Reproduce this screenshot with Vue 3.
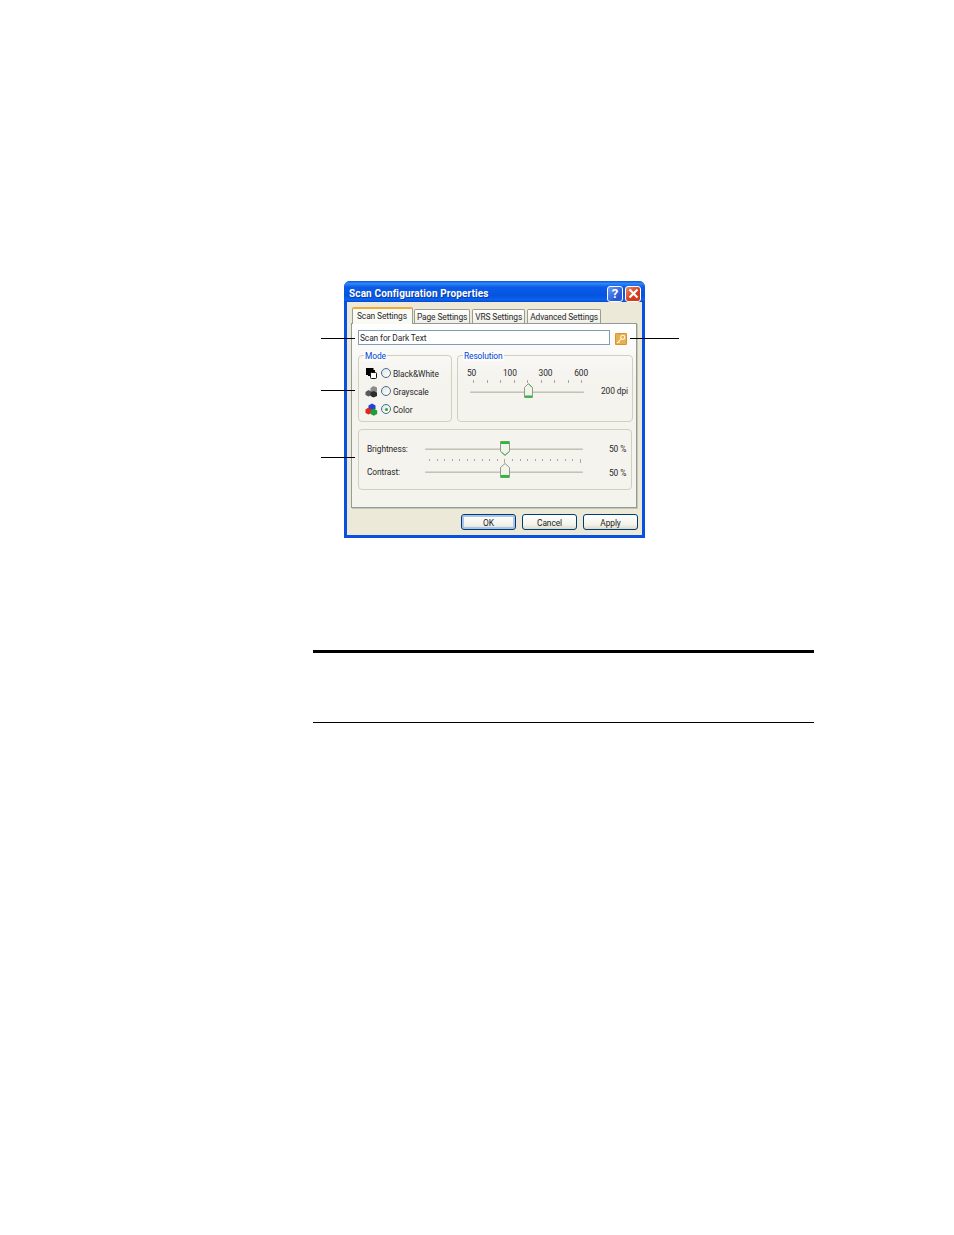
<script setup>
const modes = [
  { label: 'Black&White', kind: 'bw', on: false },
  { label: 'Grayscale', kind: 'gray', on: false },
  { label: 'Color', kind: 'color', on: true },
]
const tabs = ['Page Settings', 'VRS Settings', 'Advanced Settings']
const resLabels = ['50', '100', '300', '600']
const resTicks = 9
const fineTicks = 21
const leaders = [
  { cls: 'l1' }, { cls: 'l2' }, { cls: 'l3' }, { cls: 'l4' },
]
</script>

<template>
  <div class="page">
    <div class="stage">
      <span v-for="l in leaders" :key="l.cls" class="leader" :class="l.cls"></span>
      <div class="window">
        <div class="titlebar">
          <span class="title">Scan Configuration Properties</span>
          <span class="capbtn help">?</span>
          <span class="capbtn close">
            <svg width="11" height="11" viewBox="0 0 11 11"><path d="M1.5 1.5l8 8M9.5 1.5l-8 8" stroke="#fff" stroke-width="2.2" fill="none"/></svg>
          </span>
        </div>
        <div class="client">
          <div class="tabs">
            <div class="tab active">Scan Settings</div>
            <div v-for="t in tabs" :key="t" class="tab">{{ t }}</div>
          </div>
          <div class="panel">
            <div class="name-row">
              <div class="edit">Scan for Dark Text</div>
              <svg class="key" width="12" height="12" viewBox="0 0 12 12">
                <rect width="12" height="12" rx="1" fill="#e9ae4e"/>
                <rect x="0.5" y="0.5" width="11" height="11" rx="1" fill="none" stroke="#d4952f"/>
                <circle cx="7.8" cy="4.2" r="2" fill="#e9ae4e" stroke="#fff6dc" stroke-width="1.1"/>
                <path d="M6.2 5.8L2.2 9.8M3.3 8.7l1.2 1.2" stroke="#fff6dc" stroke-width="1.1" fill="none"/>
              </svg>
            </div>
            <div class="groups">
              <div class="group mode">
                <span class="legend">Mode</span>
                <div v-for="m in modes" :key="m.label" class="mode-row">
                  <svg class="mode-icon" width="13" height="13" viewBox="0 0 13 13">
                    <template v-if="m.kind === 'bw'">
                      <path d="M1 1H8.5V3H10V9H3V8H1Z" fill="#000"/>
                      <rect x="5.5" y="5.5" width="6" height="6" rx="1" fill="#fff" stroke="#111"/>
                    </template>
                    <template v-else-if="m.kind === 'gray'">
                      <path d="M5.5 3L8.5 1L12 2.5V6.5L8.5 8L5.5 6.5Z" fill="#8c8c8c"/>
                      <path d="M0.5 7L3.5 5L6.5 6.5V10L3.5 11.5L0.5 10Z" fill="#5a5a5a"/>
                      <path d="M5.5 7.5L8.5 6L12 7.5V11L8.5 12.5L5.5 11Z" fill="#2c2c2c"/>
                    </template>
                    <template v-else>
                      <path d="M3.5 2.5L7 0.5L10.5 2.5V6L7 8L3.5 6Z" fill="#2342d6"/>
                      <path d="M0.5 6.5L3.5 4.5L6.5 6.5V10L3.5 11.5L0.5 10Z" fill="#e0261f"/>
                      <path d="M5.5 7.5L8.8 5.5L12.2 7.5V11L8.8 12.8L5.5 11Z" fill="#1f9e36"/>
                    </template>
                  </svg>
                  <span class="radio" :class="{ on: m.on }"></span>
                  <span class="mode-label">{{ m.label }}</span>
                </div>
              </div>
              <div class="group res">
                <span class="legend">Resolution</span>
                <div class="res-labels">
                  <span v-for="r in resLabels" :key="r">{{ r }}</span>
                </div>
                <div class="ticks res-ticks">
                  <i v-for="n in resTicks" :key="n"></i>
                </div>
                <div class="res-slider">
                  <div class="track res-track">
                    <svg class="thumb res-thumb" width="9" height="15" viewBox="0 0 9 15">
                      <path d="M4.5 .5L8.5 4.5V14.5H.5V4.5Z" fill="#f3f3ea" stroke="#8d9a8c"/>
                      <path d="M1 12.5H8V14.5H1Z" fill="#22c035"/>
                      <path d="M4.5 1L8 4.5" stroke="#4bc05a" fill="none"/>
                    </svg>
                  </div>
                  <span class="dpi">200 dpi</span>
                </div>
              </div>
            </div>
            <div class="group tone">
              <div class="tone-row bright">
                <span class="tone-label">Brightness:</span>
                <div class="track tone-track">
                  <svg class="thumb tone-thumb" width="10" height="15" viewBox="0 0 10 15">
                    <path d="M.5 .5H9.5V10.5L5 14.5L.5 10.5Z" fill="#f3f3ea" stroke="#8d9a8c"/>
                    <path d="M1 .5H9V3H1Z" fill="#22c035"/>
                    <path d="M1.5 11L5 14L8.5 11" stroke="#4bc05a" fill="none"/>
                  </svg>
                </div>
                <span class="pct">50 %</span>
              </div>
              <div class="ticks fine-ticks">
                <i v-for="n in fineTicks" :key="n"></i>
              </div>
              <div class="tone-row contrast">
                <span class="tone-label">Contrast:</span>
                <div class="track tone-track">
                  <svg class="thumb tone-thumb" width="10" height="15" viewBox="0 0 10 15">
                    <path d="M5 .5L9.5 4.5V14.5H.5V4.5Z" fill="#f3f3ea" stroke="#8d9a8c"/>
                    <path d="M1 12H9V14.5H1Z" fill="#22c035"/>
                  </svg>
                </div>
                <span class="pct">50 %</span>
              </div>
            </div>
          </div>
          <div class="footer">
            <button class="btn default">OK</button>
            <button class="btn">Cancel</button>
            <button class="btn">Apply</button>
          </div>
        </div>
      </div>
    </div>
    <div class="note"></div>
  </div>
</template>

<style>
html, body { margin: 0; background: #fff; }
</style>

<style scoped>
.page {
  width: 954px;
  height: 1235px;
  box-sizing: border-box;
  padding-top: 281px;
  background: #fff;
  overflow: hidden;
  font-family: Roboto, "Liberation Sans", sans-serif;
  font-size: 8.4px;
  letter-spacing: -.1px;
  color: #2a2a2a;
}
.stage { position: relative; width: 301px; margin-left: 344px; }
.leader { position: absolute; height: 1px; background: #000; }
.l1 { left: -23px; width: 34px; top: 57px; }
.l2 { left: -23px; width: 34px; top: 109px; }
.l3 { left: -23px; width: 34px; top: 176px; }
.l4 { left: 286px; width: 49px; top: 57px; }

.window {
  width: 301px;
  height: 257px;
  display: flex;
  flex-direction: column;
  box-sizing: border-box;
  border-radius: 6px 6px 0 0;
  overflow: hidden;
  background: #0a50e0;
}
.titlebar {
  height: 21px;
  flex: none;
  display: flex;
  align-items: center;
  padding: 0 4px 0 5px;
  gap: 2px;
  background: linear-gradient(#0a57e2 0%, #2f86f6 12%, #0a5ce8 30%, #0554e0 70%, #0a63ee 90%, #0746cf 100%);
}
.title {
  flex: 1;
  color: #fff;
  font-weight: 700;
  font-size: 10px;
  letter-spacing: .13px;
  text-shadow: 1px 1px 0 #0a3aa8;
  padding-top: 4px;
}
.capbtn {
  width: 16px;
  height: 16px;
  box-sizing: border-box;
  margin-top: 4px;
  border: 1px solid #fff;
  border-radius: 3px;
  display: flex;
  align-items: center;
  justify-content: center;
}
.help {
  background: linear-gradient(135deg, #6f9cf2, #2658d8 70%);
  color: #fff;
  font-weight: 700;
  font-size: 13px;
}
.close { background: linear-gradient(135deg, #ec8a6c, #d23c18 60%); }
.client {
  flex: 1;
  margin: 0 3px 3px;
  background: #ece9d8;
  padding: 5px 4px 0;
  display: flex;
  flex-direction: column;
  min-height: 0;
}
.tabs { display: flex; height: 16px; padding-left: 1px; align-items: flex-end; position: relative; z-index: 1; }
.tab {
  height: 14px;
  line-height: 14px;
  box-sizing: border-box;
  padding: 0 2px;
  margin-right: 2px;
  border: 1px solid #9b9d8c;
  border-bottom: none;
  border-radius: 2px 2px 0 0;
  background: linear-gradient(#fff, #efeee6);
  white-space: nowrap;
}
.tab.active {
  height: 17px;
  line-height: 15px;
  margin-bottom: -1px;
  padding: 0 5px 0 4px;
  margin-right: 1px;
  background: #fafaf5;
  border-top: 2px solid #f0a838;
}
.panel {
  width: 286px;
  height: 185px;
  box-sizing: border-box;
  border: 1px solid #919b9c;
  background: linear-gradient(#fff, #f4f3ee 30%);
  padding: 6px 3px 0 6px;
  box-shadow: 1px 1px 0 #c9c7b6;
}
.name-row { display: flex; align-items: center; gap: 5px; height: 15px; }
.edit {
  width: 252px;
  height: 15px;
  line-height: 14px;
  box-sizing: border-box;
  border: 1px solid #7f9db9;
  background: #fff;
  padding-left: 1px;
}
.key { margin-top: 3px; flex: none; }
.groups { display: flex; gap: 5px; margin-top: 10px; }
.group {
  position: relative;
  box-sizing: border-box;
  border: 1px solid #d0d0bf;
  border-radius: 4px;
}
.legend {
  position: absolute;
  left: 5px;
  top: -5px;
  line-height: 10px;
  padding: 0 1px;
  background: #fbfbf9;
  color: #0046d5;
}
.mode { width: 94px; height: 67px; padding: 8px 0 0 6px; flex: none; }
.mode-row { display: flex; align-items: center; height: 18px; }
.mode-icon { flex: none; }
.radio {
  width: 10px;
  height: 10px;
  margin-left: 3px;
  box-sizing: border-box;
  flex: none;
  border: 1px solid #3f6f9a;
  border-radius: 50%;
  background: linear-gradient(135deg, #e4e4dc, #fff);
  position: relative;
}
.radio.on::after {
  content: "";
  position: absolute;
  left: 2.5px;
  top: 2.5px;
  width: 3px;
  height: 3px;
  border-radius: 50%;
  background: #2fa83c;
}
.mode-label { margin-left: 2px; padding-top: 1px; white-space: nowrap; }
.res { width: 176px; height: 67px; padding: 12px 0 0 9px; flex: none; }
.res-labels {
  display: flex;
  width: 121px;
  justify-content: space-between;
  line-height: 11px;
}
.res-labels span:nth-child(2) { margin-left: 5px; }
.ticks { display: flex; justify-content: space-between; }
.ticks i { width: 1px; height: 3px; background: #a8a8a0; display: block; }
.res-ticks { width: 109px; margin: 1px 0 0 6px; }
.res-slider { display: flex; align-items: center; margin-top: 1px; height: 15px; }
.track {
  position: relative;
  height: 1px;
  border-radius: 1px;
  background: #d8d8cc;
  border-bottom: 1px solid #c2c2b6;
}
.res-track { width: 114px; margin-left: 3px; flex: none; }
.thumb { position: absolute; top: -7px; }
.res-thumb { left: 54px; top: -8px; }
.dpi { margin-left: 17px; white-space: nowrap; margin-bottom: 2px; }
.tone {
  width: 274px;
  height: 61px;
  margin-top: 7px;
  padding: 11px 0 0 8px;
}
.tone-row { display: flex; align-items: center; height: 15px; position: relative; }
.tone-label { width: 58px; flex: none; padding-top: 1px; }
.tone-track { width: 158px; flex: none; }
.tone-thumb { left: 75px; }
.pct { margin-left: 26px; white-space: nowrap; }
.fine-ticks { width: 152px; margin: 3px 0 0 62px; }
.fine-ticks i { height: 2px; }
.fine-ticks i:last-child, .fine-ticks i:nth-child(11) { height: 4px; }
.contrast { margin-top: 1px; }
.contrast .tone-label { padding-top: 0; }
.contrast .pct { padding-top: 2px; }
.contrast .thumb { top: -8px; }
.footer {
  display: flex;
  justify-content: flex-end;
  gap: 6px;
  margin-top: 6px;
}
.btn {
  width: 55px;
  height: 16px;
  padding: 1px 0 0;
  box-sizing: border-box;
  border: 1px solid #003c74;
  border-radius: 3px;
  background: linear-gradient(#fff, #f3f2ea 70%, #dcd8c8);
  font: inherit;
  letter-spacing: inherit;
  color: #222;
}
.btn.default { box-shadow: inset 0 0 0 2px #a9c3ec; }
.note {
  margin: 112px 0 0 313px;
  width: 501px;
  height: 73px;
  box-sizing: border-box;
  border-top: 3px solid #000;
  border-bottom: 1px solid #000;
}
</style>
